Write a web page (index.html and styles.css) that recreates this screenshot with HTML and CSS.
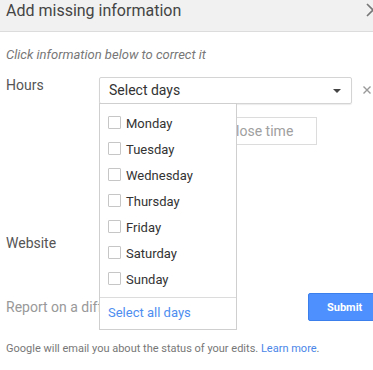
FILE: index.html
```html
<!DOCTYPE html>
<html lang="en">
<head>
    <meta charset="UTF-8">
    <meta name="viewport" content="width=device-width, initial-scale=1.0">
    <title>Add missing information</title>
    <link rel="stylesheet" href="styles.css">
</head>
<body>
    <div class="dialog">
        <div class="header">
            <span class="title">Add missing information</span>
            <svg class="close" width="14" height="14" viewBox="0 0 14 14">
                <path d="M1 1 L13 13 M13 1 L1 13" stroke="#777" stroke-width="1.6" fill="none"/>
            </svg>
        </div>

        <p class="hint">Click information below to correct it</p>

        <div class="row">
            <div class="label">Hours</div>
            <div class="field">
                <div class="select_row">
                    <div class="select_wrap">
                        <div class="select">
                            <span>Select days</span>
                            <span class="arrow"></span>
                        </div>
                        <!-- open day menu -->
                        <div class="menu">
                            <div class="menu_item"><span class="check"></span>Monday</div>
                            <div class="menu_item"><span class="check"></span>Tuesday</div>
                            <div class="menu_item"><span class="check"></span>Wednesday</div>
                            <div class="menu_item"><span class="check"></span>Thursday</div>
                            <div class="menu_item"><span class="check"></span>Friday</div>
                            <div class="menu_item"><span class="check"></span>Saturday</div>
                            <div class="menu_item"><span class="check"></span>Sunday</div>
                            <div class="menu_footer">Select all days</div>
                        </div>
                    </div>
                    <svg class="remove" width="8" height="8" viewBox="0 0 8 8">
                        <path d="M0.5 0.5 L7.5 7.5 M7.5 0.5 L0.5 7.5" stroke="#999" stroke-width="1.4" fill="none"/>
                    </svg>
                </div>
                <div class="time_row">
                    <div class="time_input">Open time</div>
                    <div class="time_input">Close time</div>
                </div>
            </div>
        </div>

        <div class="row website">
            <div class="label">Website</div>
        </div>

        <div class="report_row">
            <span class="report">Report on a different problem</span>
            <button class="submit">Submit</button>
        </div>

        <p class="footer">Google will email you about the status of your edits. <a href="#">Learn more</a>.</p>
    </div>
</body>
</html>
```

FILE: styles.css
```css
body{
    margin: 0;
    overflow: hidden;
    background-color: #fff;
    font-family: Roboto, "Liberation Sans", Arial, sans-serif;
}
.dialog{
    width: 400px;
}
.header{
    box-sizing: border-box;
    height: 32px;
    padding: 1px 20px 0 6px;
    background-color: #f1f1f1;
    border-bottom: 1px solid #dcdcdc;
    display: flex;
    justify-content: space-between;
}
.title{
    font-size: 16px;
    line-height: 20px;
    color: #444;
}
.close{
    margin-top: 2px;
}
.hint{
    margin: 15px 0 0 6px;
    font-size: 13px;
    line-height: 16px;
    font-style: italic;
    color: #777;
}
.row{
    display: flex;
    align-items: flex-start;
    margin-top: 12px;
    padding-left: 6px;
}
.label{
    width: 93px;
    font-size: 14px;
    line-height: 20px;
    color: #555;
}
.field{
    padding-top: 2px;
}
.select_row{
    display: flex;
    align-items: center;
}
.select_wrap{
    position: relative;
}
.select{
    box-sizing: border-box;
    width: 253px;
    height: 27px;
    padding: 0 10px 0 9px;
    border: 1px solid #d4d4d4;
    border-radius: 2px;
    box-shadow: 0 1px 1px rgba(0, 0, 0, 0.08);
    display: flex;
    align-items: center;
    justify-content: space-between;
    font-size: 14px;
    line-height: 25px;
    color: #333;
}
.arrow{
    width: 0;
    height: 0;
    border-left: 4px solid transparent;
    border-right: 4px solid transparent;
    border-top: 4px solid #444;
}
.remove{
    margin-left: 11px;
    margin-top: -1px;
}
.menu{
    position: absolute;
    top: 26px;
    left: 0;
    z-index: 10;
    box-sizing: border-box;
    width: 138px;
    padding-top: 6px;
    background-color: #fff;
    border: 1px solid #cfcfcf;
}
.menu_item{
    display: flex;
    align-items: center;
    height: 26px;
    padding-left: 8px;
    font-size: 13px;
    color: #333;
}
.check{
    box-sizing: border-box;
    width: 13px;
    height: 13px;
    margin: -1px 5px 0 0;
    border: 1px solid #c6c6c6;
    border-radius: 1px;
}
.menu_footer{
    margin-top: 5px;
    padding: 1px 0 2px 8px;
    border-top: 1px solid #dcdcdc;
    font-size: 13px;
    line-height: 28px;
    color: #4d8ef0;
}
.time_row{
    display: flex;
    gap: 18px;
    margin-top: 13px;
}
.time_input{
    box-sizing: border-box;
    width: 100px;
    height: 28px;
    padding-left: 9px;
    border: 1px solid #dcdcdc;
    font-size: 14px;
    line-height: 26px;
    color: #a0a0a0;
}
.website{
    margin-top: 88px;
}
.report_row{
    display: flex;
    align-items: center;
    justify-content: space-between;
    margin-top: 40px;
    padding: 0 12px 0 6px;
}
.report{
    font-size: 14px;
    line-height: 20px;
    color: #999;
}
.submit{
    box-sizing: border-box;
    width: 80px;
    height: 28px;
    padding: 0 0 0 18px;
    text-align: left;
    background-color: #4d90fe;
    border: 1px solid #3b7fec;
    border-radius: 2px;
    font-family: Roboto, "Liberation Sans", Arial, sans-serif;
    font-size: 11px;
    font-weight: bold;
    color: #fff;
}
.footer{
    margin: 20px 0 0 6px;
    font-size: 11px;
    line-height: 16px;
    color: #777;
}
.footer a{
    color: #4a86e8;
    text-decoration: none;
}
```
